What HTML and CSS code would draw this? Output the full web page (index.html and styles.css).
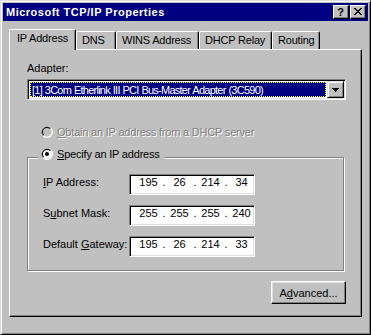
FILE: index.html
```html
<!DOCTYPE html>
<html lang="en">
<head>
<meta charset="utf-8">
<title>Microsoft TCP/IP Properties</title>
<link rel="stylesheet" href="styles.css">
</head>
<body>
<div class="window">
  <div class="titlebar">
    <span class="title-text">Microsoft TCP/IP Properties</span>
    <div class="caption-buttons">
      <span class="cap-btn help">?</span>
      <span class="cap-btn close">
        <svg width="8" height="7" viewBox="0 0 8 7" shape-rendering="crispEdges"><path fill="#000" d="M0 0h2v1H0z M6 0h2v1H6z M1 1h2v1H1z M5 1h2v1H5z M2 2h4v1H2z M3 3h2v1H3z M2 4h4v1H2z M1 5h2v1H1z M5 5h2v1H5z M0 6h2v1H0z M6 6h2v1H6z"/></svg>
      </span>
    </div>
  </div>

  <div class="tabs">
    <div class="tab active w-ip">IP Address</div>
    <div class="tab w-dns">DNS</div>
    <div class="tab w-wins">WINS Address</div>
    <div class="tab w-dhcp">DHCP Relay</div>
    <div class="tab w-routing">Routing</div>
  </div>

  <div class="panel">
    <div class="label">Adapter:</div>
    <div class="combo">
      <div class="combo-value">[1] 3Com Etherlink III PCI Bus-Master Adapter (3C590)</div>
      <div class="combo-btn">
        <svg width="7" height="4" viewBox="0 0 7 4" shape-rendering="crispEdges"><path fill="#000" d="M0 0h7v1H0z M1 1h5v1H1z M2 2h3v1H2z M3 3h1v1H3z"/></svg>
      </div>
    </div>

    <div class="radio-row obtain disabled">
      <svg class="radio" width="12" height="12" viewBox="0 0 12 12">
        <circle cx="6" cy="6" r="6" fill="#fff"/>
        <path d="M10.24 1.76 A6 6 0 0 0 1.76 10.24 Z" fill="#808080"/>
        <circle cx="6" cy="6" r="5" fill="#dfdfdf"/>
        <path d="M9.54 2.46 A5 5 0 0 0 2.46 9.54 Z" fill="#000"/>
        <circle cx="6" cy="6" r="4" fill="#c0c0c0"/>
      </svg>
      <span class="radio-text"><u>O</u>btain an IP address from a DHCP server</span>
    </div>

    <div class="group">
      <div class="radio-row legend">
        <svg class="radio" width="12" height="12" viewBox="0 0 12 12">
          <circle cx="6" cy="6" r="6" fill="#fff"/>
          <path d="M10.24 1.76 A6 6 0 0 0 1.76 10.24 Z" fill="#808080"/>
          <circle cx="6" cy="6" r="5" fill="#dfdfdf"/>
          <path d="M9.54 2.46 A5 5 0 0 0 2.46 9.54 Z" fill="#000"/>
          <circle cx="6" cy="6" r="4" fill="#fff"/>
          <circle cx="6" cy="6" r="2" fill="#000"/>
        </svg>
        <span class="radio-text"><u>S</u>pecify an IP address</span>
      </div>

      <div class="field-row first">
        <span class="field-label"><u>I</u>P Address:</span>
        <div class="ip-field">
          <span class="octet">195</span><span class="dot">.</span><span class="octet">26</span><span class="dot">.</span><span class="octet">214</span><span class="dot">.</span><span class="octet">34</span>
        </div>
      </div>
      <div class="field-row">
        <span class="field-label">S<u>u</u>bnet Mask:</span>
        <div class="ip-field">
          <span class="octet">255</span><span class="dot">.</span><span class="octet">255</span><span class="dot">.</span><span class="octet">255</span><span class="dot">.</span><span class="octet">240</span>
        </div>
      </div>
      <div class="field-row">
        <span class="field-label">Default <u>G</u>ateway:</span>
        <div class="ip-field">
          <span class="octet">195</span><span class="dot">.</span><span class="octet">26</span><span class="dot">.</span><span class="octet">214</span><span class="dot">.</span><span class="octet">33</span>
        </div>
      </div>
    </div>

    <div class="actions">
      <div class="button">A<u>d</u>vanced...</div>
    </div>
  </div>
</div>
</body>
</html>
```

FILE: styles.css
```css
* { box-sizing: border-box; }

html, body {
  margin: 0;
  padding: 0;
  background: #c0c0c0;
}

body {
  font-family: "Liberation Sans", Arial, sans-serif;
  font-size: 11px;
  line-height: 13px;
  color: #000;
}

.window {
  width: 371px;
  height: 335px;
  background: #c0c0c0;
  border: 1px solid;
  border-color: #dfdfdf #000 #000 #dfdfdf;
  box-shadow: inset 1px 1px #fff, inset -1px -1px #808080;
  padding: 2px;
  display: flex;
  flex-direction: column;
}

/* Title bar */
.titlebar {
  height: 18px;
  flex: none;
  background: #000080;
  color: #fff;
  display: flex;
  align-items: flex-start;
  justify-content: space-between;
  padding: 0 2px 0 3px;
}

.title-text {
  font-weight: bold;
  line-height: 18px;
  letter-spacing: 0.5px;
  white-space: nowrap;
}

.caption-buttons {
  display: flex;
  gap: 1px;
  margin-top: 2px;
}

.cap-btn {
  width: 16px;
  height: 14px;
  background: #c0c0c0;
  border: 1px solid;
  border-color: #fff #000 #000 #fff;
  box-shadow: inset -1px -1px #808080;
  color: #000;
  display: flex;
  justify-content: center;
}

.help {
  font-weight: bold;
  line-height: 12px;
  padding-right: 1px;
}

.close {
  padding-top: 2px;
  padding-right: 1px;
}

.close svg { display: block; }

/* Tabs */
.tabs {
  display: flex;
  align-items: flex-end;
  flex: none;
  height: 21px;
  margin: 8px 0 -1px 6px;
}

.tab {
  height: 18px;
  margin-bottom: 1px;
  border: 1px solid;
  border-bottom: 0;
  border-color: #fff #000 transparent #fff;
  border-radius: 2px 2px 0 0;
  box-shadow: inset -1px 0 #808080;
  padding: 2px 0 0 5px;
  white-space: nowrap;
  letter-spacing: -0.2px;
  background: #c0c0c0;
}

.tab.active {
  height: 21px;
  margin-bottom: 0;
  padding-left: 7px;
  position: relative;
  z-index: 1;
}

.w-ip { width: 67px; }
.w-dns { width: 40px; }
.w-wins { width: 83px; }
.w-dhcp { width: 73px; }
.w-routing { width: 48px; }

/* Panel */
.panel {
  flex: none;
  height: 268px;
  margin: 0 6px;
  background: #c0c0c0;
  border: 1px solid;
  border-color: #fff #000 #000 #fff;
  box-shadow: inset -1px -1px #808080;
  padding: 12px 15px 0 17px;
}

.combo {
  margin-top: 4px;
  width: 319px;
  height: 21px;
  background: #fff;
  border: 1px solid;
  border-color: #808080 #fff #fff #808080;
  box-shadow: inset 1px 1px #000, inset -1px -1px #dfdfdf;
  padding: 1px;
  display: flex;
}

.combo-value {
  flex: 1;
  min-width: 0;
  height: 15px;
  margin: 1px;
  background: #000080;
  color: #fff;
  border: 1px dotted #ffff00;
  padding: 1px 0 0 1px;
  line-height: 12px;
  letter-spacing: -0.75px;
  word-spacing: 0.5px;
  white-space: nowrap;
  overflow: hidden;
}

.combo-btn {
  width: 17px;
  height: 17px;
  flex: none;
  background: #c0c0c0;
  border: 1px solid;
  border-color: #dfdfdf #000 #000 #dfdfdf;
  box-shadow: inset 1px 1px #fff, inset -1px -1px #808080;
  display: flex;
  justify-content: center;
  padding-top: 6px;
}

.combo-btn svg { display: block; }

/* Radios */
.radio-row {
  display: flex;
  align-items: flex-start;
  gap: 4px;
  height: 13px;
}

.radio { display: block; flex: none; }

.radio-text {
  letter-spacing: -0.2px;
  white-space: nowrap;
}

.obtain {
  margin: 26px 0 0 14px;
}

.disabled .radio-text {
  color: #808080;
  text-shadow: 1px 1px 0 #fff;
}

/* Group box */
.group {
  margin-top: 18px;
  width: 317px;
  border: 1px solid #808080;
  box-shadow: 1px 1px 0 #fff, inset 1px 1px 0 #fff;
  padding: 0 0 13px 0;
}

.legend {
  width: max-content;
  margin: -10px 0 0 10px;
  padding: 0 5px 0 3px;
  background: #c0c0c0;
}

.field-row {
  display: flex;
  align-items: flex-start;
  height: 21px;
  margin-top: 10px;
  padding-left: 15px;
}

.field-row.first { margin-top: 13px; }

.field-label {
  width: 86px;
  flex: none;
  padding-top: 2px;
  white-space: nowrap;
}

.ip-field {
  width: 126px;
  height: 21px;
  flex: none;
  background: #fff;
  border: 1px solid;
  border-color: #808080 #fff #fff #808080;
  box-shadow: inset 1px 1px #000, inset -1px -1px #dfdfdf;
  padding: 1px 0 0 7px;
  display: flex;
}

.octet {
  width: 23px;
  flex: none;
  text-align: center;
}

.dot {
  width: 8px;
  flex: none;
  text-align: center;
}

/* Buttons */
.actions {
  display: flex;
  justify-content: flex-end;
  margin-top: 10px;
}

.button {
  width: 75px;
  height: 23px;
  background: #c0c0c0;
  border: 1px solid;
  border-color: #fff #000 #000 #fff;
  box-shadow: inset -1px -1px #808080, inset 1px 1px #dfdfdf;
  padding-top: 5px;
  text-align: center;
  white-space: nowrap;
}
```
